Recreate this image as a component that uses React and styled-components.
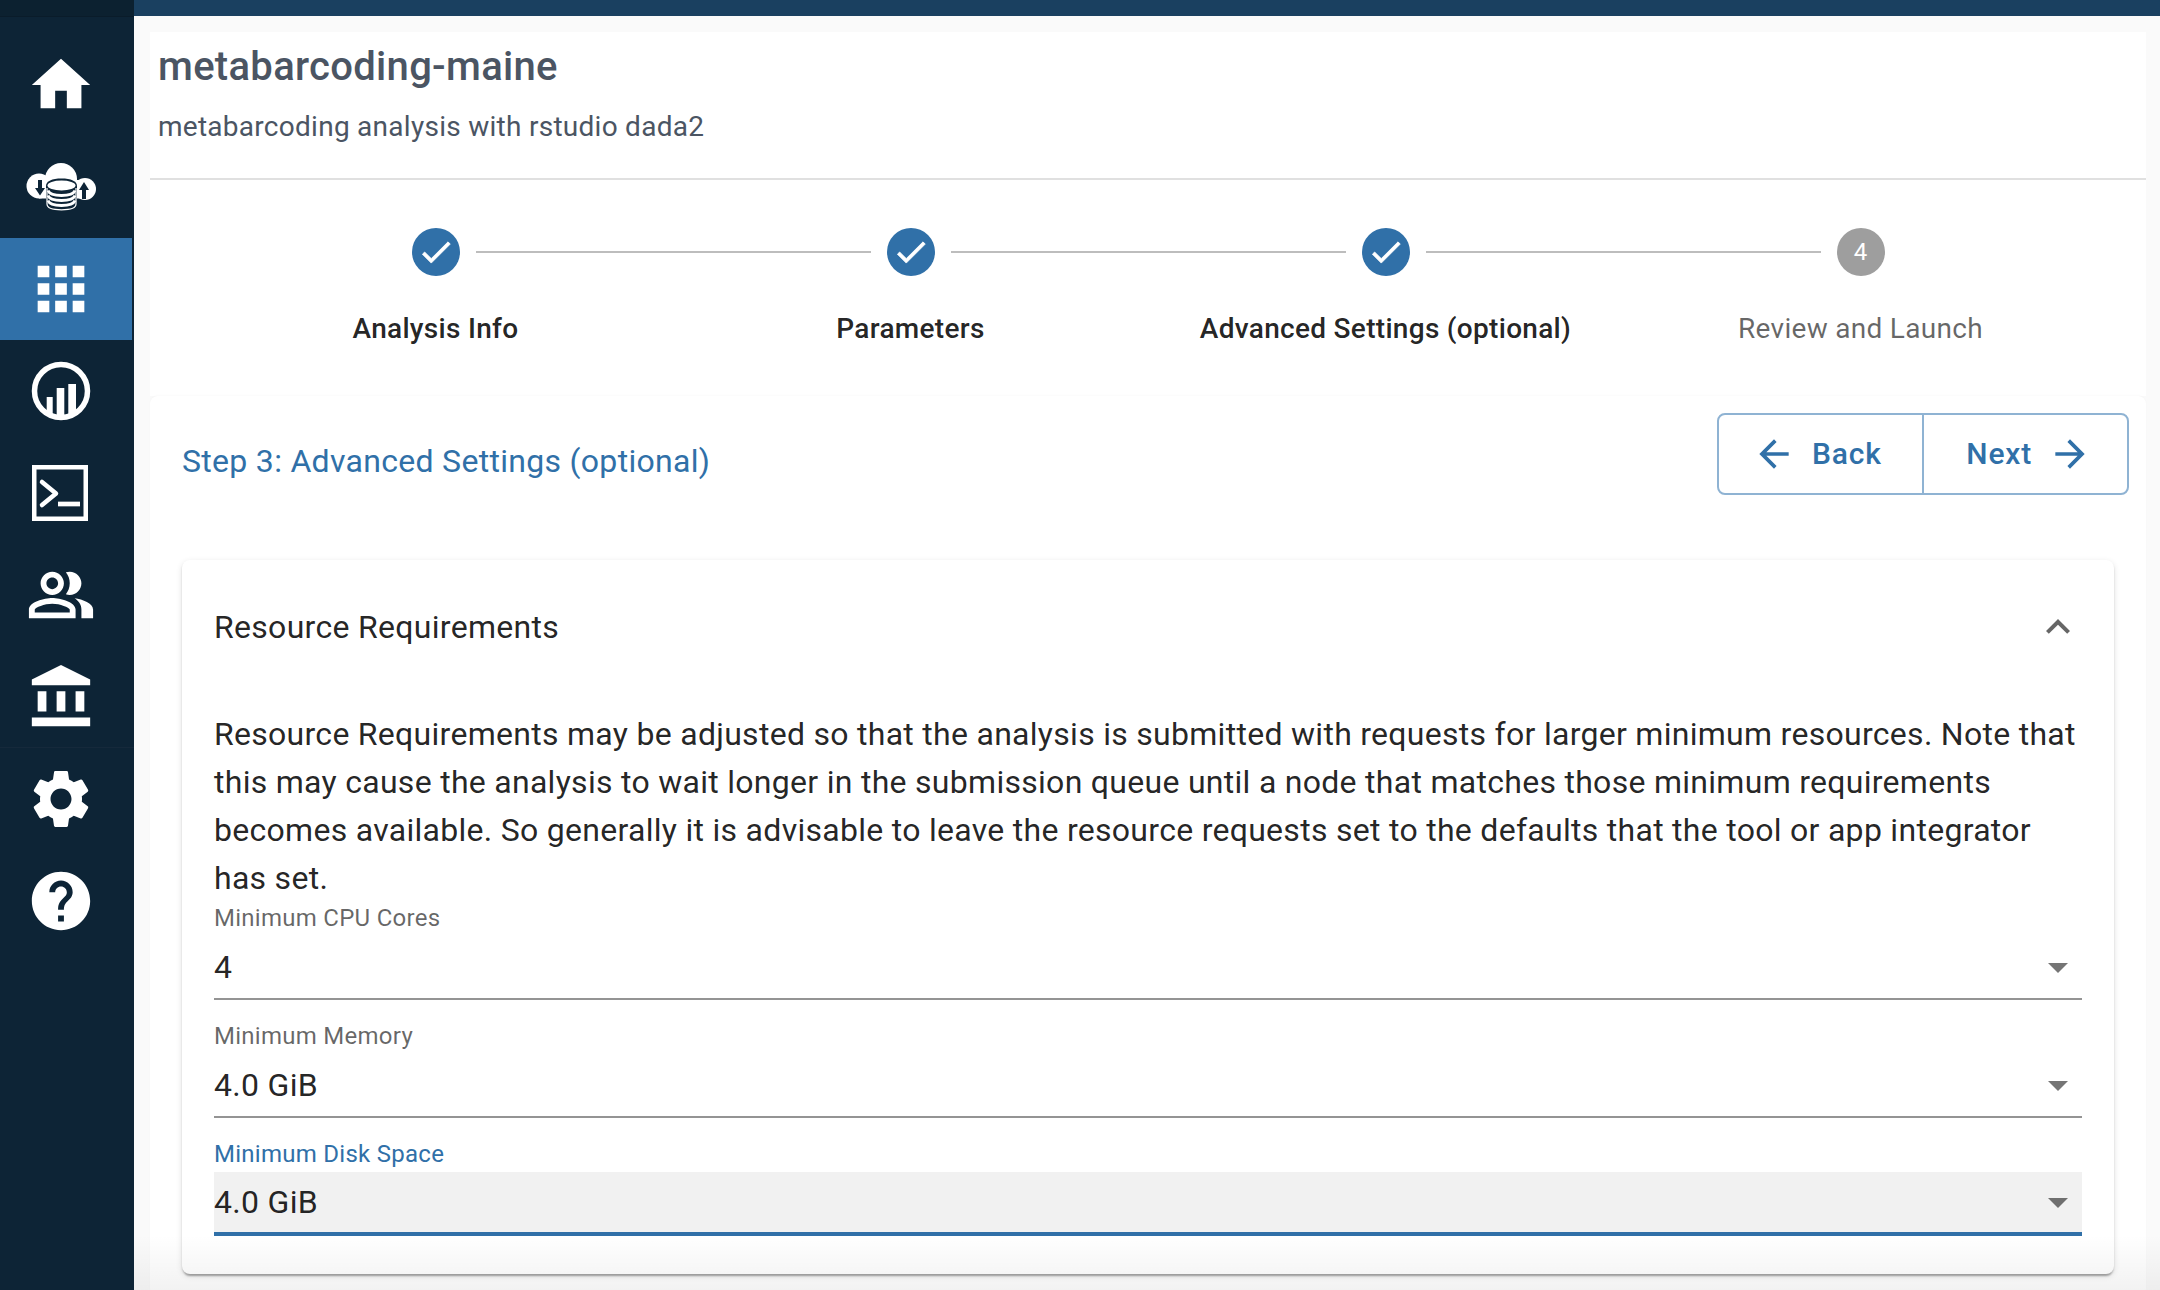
import React from "react";
import styled, { createGlobalStyle } from "styled-components";

const Global = createGlobalStyle`
  html, body { margin: 0; padding: 0; height: 100%; background: #f5f5f5; }
  body { font-family: Roboto, "Liberation Sans", sans-serif; overflow: hidden; }
  * { box-sizing: border-box; }
`;

const Shell = styled.div`display: flex; width: 2160px; height: 1290px; overflow: hidden;`;
const Sidebar = styled.nav`width: 134px; flex: none; background: #0d2436; display: flex; flex-direction: column;`;
const SideCap = styled.div`height: 17px; margin-bottom: 17px; background: #0c2130; border-bottom: 1px solid #0a1c2a;`;
const NavItem = styled.div`
  width: ${p => (p.$active ? "132px" : "134px")};
  height: 102px; display: flex; align-items: center; padding-left: 26px;
  background: ${p => (p.$active ? "#3070a8" : "transparent")};
  color: #fff;
  border-bottom: ${p => (p.$rule ? "1px solid #15293b" : "none")};
`;
const NavIcon = styled.svg`width: 70px; height: 70px; fill: currentColor; display: block; flex: none;`;
const Main = styled.main`position: relative; flex: 1; display: flex; flex-direction: column; background: #fafafa; min-width: 0;`;
const BottomFade = styled.div`
  position: absolute; left: 0; right: 0; bottom: 0; height: 55px; pointer-events: none;
  background: linear-gradient(to bottom, rgba(0,0,0,0), rgba(0,0,0,.05));
`;
const TopBar = styled.div`height: 16px; background: #1a4060; flex: none;`;
const Content = styled.div`padding: 16px 14px 0 16px; display: flex; flex-direction: column;`;
const Header = styled.header`background: #fff; height: 148px; border-bottom: 2px solid #e0e0e0; padding: 11px 8px 0; color: #4b5563;`;
const Title = styled.h1`margin: 0; font-size: 40px; line-height: 48px; font-weight: 500; letter-spacing: 0.3px;`;
const Subtitle = styled.p`margin: 15px 0 0; font-size: 28px; line-height: 42px; font-weight: 400; letter-spacing: 0.27px;`;
const Stepper = styled.div`background: #fff; height: 216px; padding: 48px 48px 0; display: flex;`;
const Step = styled.div`flex: 1; display: flex; flex-direction: column; align-items: stretch;`;
const StepTrack = styled.div`display: flex; align-items: center; gap: 16px; height: 48px;`;
const TrackLine = styled.span`flex: 1; height: 2px; background: ${p => (p.$on ? "#bdbdbd" : "transparent")};`;
const StepDot = styled.span`
  width: 48px; height: 48px; border-radius: 50%; flex: none;
  display: flex; align-items: center; justify-content: center;
  background: ${p => (p.$done ? "#3070a8" : "#9e9e9e")}; color: #fff; font-size: 24px;
`;
const CheckIcon = styled.svg`width: 38px; height: 38px; fill: #fff; stroke: #fff; stroke-width: 0.5;`;
const StepLabel = styled.div`
  margin-top: 33px; text-align: center; font-size: 28px; line-height: 40px;
  letter-spacing: 0.3px;
  font-weight: ${p => (p.$done ? 500 : 400)};
  color: ${p => (p.$done ? "rgba(0,0,0,.87)" : "rgba(0,0,0,.6)")};
`;
const Panel = styled.section`background: #fff; border-radius: 8px; padding: 17px 32px 0; height: 900px; box-shadow: 0 -1px 2px rgba(0,0,0,.02);`;
const PanelHead = styled.div`display: flex; justify-content: space-between; align-items: flex-start; margin-right: -15px;`;
const StepTitle = styled.h2`margin: 24px 0 0; font-size: 32px; line-height: 48px; font-weight: 400; color: #3070a8; letter-spacing: 0.3px;`;
const ButtonGroup = styled.div`display: flex; height: 82px;`;
const NavButton = styled.button`
  font: 500 30px/40px Roboto, sans-serif; letter-spacing: 0.8px; color: #3070a8;
  background: #fff; border: 2px solid #8fb3d3; display: flex; align-items: center; gap: 16px;
  width: 207px;
  justify-content: ${p => (p.$first ? "flex-start" : "flex-end")};
  padding: ${p => (p.$first ? "0 0 0 33px" : "0 35px 0 0")};
  border-radius: ${p => (p.$first ? "8px 0 0 8px" : "0 8px 8px 0")};
  margin-left: ${p => (p.$first ? 0 : "-2px")};
`;
const ButtonIcon = styled.svg`width: 44px; height: 44px; fill: currentColor; flex: none;`;
const Card = styled.article`
  margin-top: 65px; background: #fff; border-radius: 8px; height: 714px; padding: 0 32px;
  box-shadow: 0 4px 2px -2px rgba(0,0,0,.2), 0 2px 2px 0 rgba(0,0,0,.14), 0 2px 6px 0 rgba(0,0,0,.12);
`;
const CardHead = styled.div`display: flex; align-items: center; justify-content: space-between; height: 134px;`;
const CardTitle = styled.h3`margin: 0; font-size: 32px; line-height: 48px; font-weight: 400; letter-spacing: 0.3px; color: rgba(0,0,0,.87);`;
const Chevron = styled.svg`width: 48px; height: 48px; fill: rgba(0,0,0,.6); flex: none;`;
const Body = styled.p`margin: 16px 0 0; font-size: 32px; line-height: 48px; letter-spacing: 0.285px; color: rgba(0,0,0,.87);`;
const Fields = styled.div`display: flex; flex-direction: column; gap: 18px; margin-top: -2px;`;
const Field = styled.div`display: flex; flex-direction: column;`;
const FieldLabel = styled.label`font-size: 24px; line-height: 36px; letter-spacing: 0.27px; color: ${p => (p.$focus ? "#3070a8" : "rgba(0,0,0,.6)")};`;
const SelectRow = styled.div`
  height: 64px; display: flex; align-items: center; justify-content: space-between;
  background: ${p => (p.$focus ? "#f1f1f1" : "transparent")};
  border-bottom: ${p => (p.$focus ? "4px solid #3070a8" : "2px solid #949494")};
`;
const SelectValue = styled.span`font-size: 32px; letter-spacing: 0.3px; color: rgba(0,0,0,.87);`;
const DropIcon = styled.svg`width: 48px; height: 48px; fill: rgba(0,0,0,.54); flex: none;`;

const DARK = "#0d2436";
const Cloud = () => (
  <NavIcon viewBox="0 0 70 70">
    <circle cx="13" cy="34" r="12.500" />
    <circle cx="35" cy="27" r="16" />
    <circle cx="59" cy="37" r="11" />
    <path d="M13 28h46v18.500H13z" />
    <path fill={DARK} d="M12 28h4v8h3l-5 7.500L9 36h3zM60 47h-4v-9h-3l5-8 5 8h-3z" />
    <path fill={DARK} d="M20 34c0-5 6-7.500 15.500-7.500S51 29 51 34v18c0 5-6 7.500-15.500 7.500S20 57 20 52z" />
    <ellipse cx="35.500" cy="33.500" rx="14" ry="5" />
    <g fill="none" stroke="#fff">
      <path strokeWidth="2.800" d="M22 38.500c1.500 4 7 5 13.500 5s12-1 13.500-5" />
      <path strokeWidth="2.800" d="M22 43.500c1.500 4 7 5 13.500 5s12-1 13.500-5" />
      <path strokeWidth="2.800" d="M22 48.500c1.500 4 7 5 13.500 5s12-1 13.500-5" />
      <path strokeWidth="1.200" d="M21 36v16c0 3.800 6 5.800 14.500 5.800S50 55.800 50 52V36" />
    </g>
  </NavIcon>
);
const Chart = () => (
  <NavIcon viewBox="0 0 70 70">
    <circle cx="35" cy="35" r="26.500" fill="none" stroke="currentColor" strokeWidth="5.500" />
    <path d="M20.700 41h6v17h-6zM30.700 32h7.600v28h-7.600zM42.300 28H50v30h-7.700z" />
  </NavIcon>
);
const Terminal = () => (
  <NavIcon viewBox="0 0 70 70">
    <path fill="none" stroke="currentColor" strokeWidth="4.500" d="M8.250 9.250h51.500v51.500H8.250z" />
    <path fill="none" stroke="currentColor" strokeWidth="4.500" strokeLinecap="round" strokeLinejoin="round" d="M16 24l14 11.500L16 47" />
    <path fill="none" stroke="currentColor" strokeWidth="4.700" d="M32 46h22" />
  </NavIcon>
);
const Mui = ({ d }) => <NavIcon viewBox="0 0 24 24"><path d={d} /></NavIcon>;

const icons = {
  home: "M10 20v-6h4v6h5v-8h3L12 3 2 12h3v8z",
  apps: "M4 8h4V4H4v4zm6 12h4v-4h-4v4zm-6 0h4v-4H4v4zm0-6h4v-4H4v4zm6 0h4v-4h-4v4zm6-10v4h4V4h-4zm-6 4h4V4h-4v4zm6 6h4v-4h-4v4zm0 6h4v-4h-4v4z",
  group: "M16.670 13.130C18.040 14.060 19 15.320 19 17v3h4v-3c0-2.180-3.570-3.470-6.330-3.870zM15 12c2.210 0 4-1.790 4-4s-1.790-4-4-4c-.47 0-.91.1-1.330.24C14.500 5.270 15 6.580 15 8s-.5 2.730-1.330 3.760c.42.14.86.24 1.330.24zM9 12c2.210 0 4-1.790 4-4s-1.790-4-4-4-4 1.790-4 4 1.790 4 4 4zm0-6c1.100 0 2 .9 2 2s-.9 2-2 2-2-.9-2-2 .9-2 2-2zM9 13c-2.670 0-8 1.340-8 4v3h16v-3c0-2.660-5.330-4-8-4zm6 5H3v-.99C3.200 16.290 6.300 15 9 15s5.800 1.290 6 2v1z",
  bank: "M4 10h3v7H4zM10.500 10h3v7h-3zM2 19h20v3H2zM17 10h3v7h-3zM12 1 2 6v2h20V6z",
  gear: "M19.140 12.940c.04-.3.06-.61.06-.94 0-.32-.02-.64-.07-.94l2.030-1.580c.18-.14.23-.41.12-.61l-1.920-3.320c-.12-.22-.37-.29-.59-.22l-2.390.96c-.5-.38-1.030-.7-1.620-.94l-.36-2.540c-.04-.24-.24-.41-.48-.41h-3.840c-.24 0-.43.17-.47.41l-.36 2.540c-.59.24-1.130.57-1.620.94l-2.390-.96c-.22-.08-.47 0-.59.22L2.740 8.870c-.12.21-.08.47.12.61l2.030 1.580c-.05.3-.09.63-.09.94s.02.64.07.94l-2.030 1.580c-.18.14-.23.41-.12.61l1.920 3.320c.12.22.37.29.59.22l2.390-.96c.5.38 1.030.7 1.620.94l.36 2.540c.05.24.24.41.48.41h3.840c.24 0 .44-.17.47-.41l.36-2.540c.59-.24 1.130-.56 1.620-.94l2.390.96c.22.08.47 0 .59-.22l1.920-3.320c.12-.22.07-.47-.12-.61l-2.010-1.580zM12 15.600c-1.980 0-3.600-1.620-3.600-3.600s1.620-3.600 3.600-3.600 3.600 1.620 3.600 3.600-1.620 3.600-3.600 3.600z",
  help: "M12 2C6.480 2 2 6.480 2 12s4.480 10 10 10 10-4.480 10-10S17.520 2 12 2zm1 17h-2v-2h2v2zm2.070-7.750l-.9.92C13.450 12.900 13 13.500 13 15h-2v-.5c0-1.100.45-2.100 1.170-2.830l1.240-1.260c.37-.36.59-.86.59-1.410 0-1.100-.9-2-2-2s-2 .9-2 2H8c0-2.210 1.790-4 4-4s4 1.790 4 4c0 .88-.36 1.680-.93 2.250z",
};

const steps = [
  { label: "Analysis Info", done: true },
  { label: "Parameters", done: true },
  { label: "Advanced Settings (optional)", done: true },
  { label: "Review and Launch", done: false, n: 4 },
];
const fields = [
  { label: "Minimum CPU Cores", value: "4" },
  { label: "Minimum Memory", value: "4.0 GiB" },
  { label: "Minimum Disk Space", value: "4.0 GiB", focus: true },
];

export default function App() {
  return (
    <Shell>
      <Global />
      <Sidebar>
        <SideCap />
        <NavItem><Mui d={icons.home} /></NavItem>
        <NavItem><Cloud /></NavItem>
        <NavItem $active><Mui d={icons.apps} /></NavItem>
        <NavItem><Chart /></NavItem>
        <NavItem><Terminal /></NavItem>
        <NavItem><Mui d={icons.group} /></NavItem>
        <NavItem $rule><Mui d={icons.bank} /></NavItem>
        <NavItem><Mui d={icons.gear} /></NavItem>
        <NavItem><Mui d={icons.help} /></NavItem>
      </Sidebar>
      <Main>
        <TopBar />
        <Content>
          <Header>
            <Title>metabarcoding-maine</Title>
            <Subtitle>metabarcoding analysis with rstudio dada2</Subtitle>
          </Header>
          <Stepper>
            {steps.map((s, i) => (
              <Step key={s.label}>
                <StepTrack>
                  <TrackLine $on={i > 0} />
                  <StepDot $done={s.done}>
                    {s.done ? (
                      <CheckIcon viewBox="0 0 24 24"><path d="M9 16.170 4.830 12l-1.420 1.410L9 19 21 7l-1.410-1.410z" /></CheckIcon>
                    ) : s.n}
                  </StepDot>
                  <TrackLine $on={i < steps.length - 1} />
                </StepTrack>
                <StepLabel $done={s.done}>{s.label}</StepLabel>
              </Step>
            ))}
          </Stepper>
          <Panel>
            <PanelHead>
              <StepTitle>Step 3: Advanced Settings (optional)</StepTitle>
              <ButtonGroup>
                <NavButton $first>
                  <ButtonIcon viewBox="0 0 24 24"><path d="M20 11H7.830l5.590-5.590L12 4l-8 8 8 8 1.410-1.410L7.830 13H20v-2z" /></ButtonIcon>
                  Back
                </NavButton>
                <NavButton>
                  Next
                  <ButtonIcon viewBox="0 0 24 24"><path d="m12 4-1.410 1.410L16.170 11H4v2h12.170l-5.580 5.590L12 20l8-8z" /></ButtonIcon>
                </NavButton>
              </ButtonGroup>
            </PanelHead>
            <Card>
              <CardHead>
                <CardTitle>Resource Requirements</CardTitle>
                <Chevron viewBox="0 0 24 24"><path d="M12 8l-6 6 1.410 1.410L12 10.830l4.590 4.580L18 14z" /></Chevron>
              </CardHead>
              <Body>Resource Requirements may be adjusted so that the analysis is submitted with requests for larger minimum resources. Note that this may cause the analysis to wait longer in the submission queue until a node that matches those minimum requirements becomes available. So generally it is advisable to leave the resource requests set to the defaults that the tool or app integrator has set.</Body>
              <Fields>
                {fields.map(f => (
                  <Field key={f.label}>
                    <FieldLabel $focus={f.focus}>{f.label}</FieldLabel>
                    <SelectRow $focus={f.focus}>
                      <SelectValue>{f.value}</SelectValue>
                      <DropIcon viewBox="0 0 24 24"><path d="M7 10l5 5 5-5z" /></DropIcon>
                    </SelectRow>
                  </Field>
                ))}
              </Fields>
            </Card>
          </Panel>
        </Content>
        <BottomFade />
      </Main>
    </Shell>
  );
}
